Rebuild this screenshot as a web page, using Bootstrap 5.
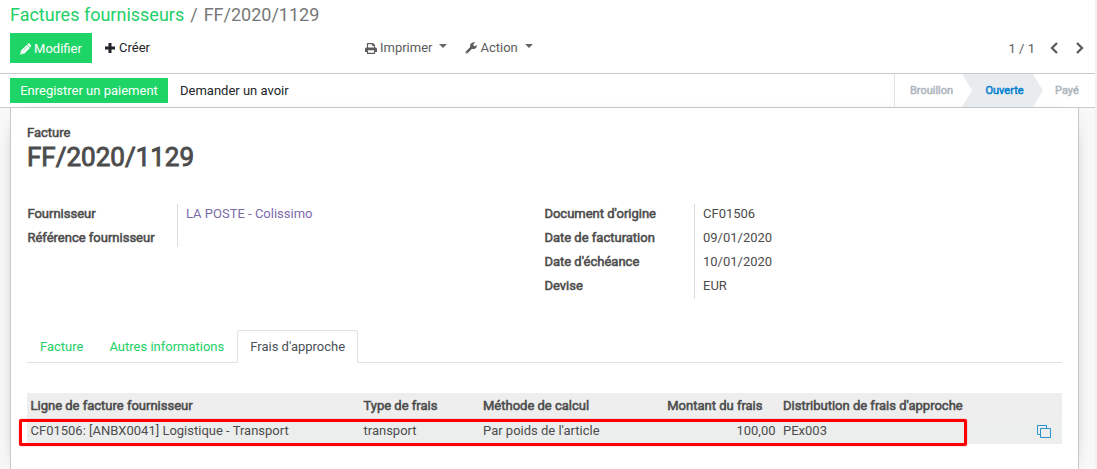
<!DOCTYPE html>
<html lang="fr">
<head>
<meta charset="utf-8">
<meta name="viewport" content="width=device-width, initial-scale=1">
<title>FF/2020/1129</title>
<link href="https://cdn.jsdelivr.net/npm/bootstrap@5.3.0/dist/css/bootstrap.min.css" rel="stylesheet">
<style>
body{font-family:Roboto,"Liberation Sans",sans-serif;font-size:13px;line-height:19.5px;color:#4c4c4c;height:469px;overflow:hidden;background:#f1f1f1}
a{text-decoration:none}
.page-area{width:1095px;height:469px;background:#f8f8f8;overflow:hidden}
.control-panel{height:74px;border-bottom:1px solid #cacaca;padding:0 10px}
.trail{height:33px;padding-top:1px;font-size:18px;line-height:27px;color:#777}
.trail .breadcrumb-item+.breadcrumb-item::before{color:#777;padding-right:6px}
.trail .breadcrumb-item+.breadcrumb-item{padding-left:6px}
.trail a,.nav-tabs .nav-link{color:#21d067}
.btn{--bs-btn-font-size:13px;--bs-btn-line-height:19.5px;--bs-btn-border-radius:0;--bs-btn-border-width:0}
.btn-main{--bs-btn-color:#fff;--bs-btn-bg:#1dd467;--bs-btn-hover-bg:#19b658;--bs-btn-hover-color:#fff}
.edit-btn{width:82px;height:30px;padding:1px 0 0}
.tool{color:#5c5c5c}
.caret{width:0;border:4px solid transparent;border-top-color:#666;border-bottom:0;margin-left:7px;margin-bottom:4px}
.status-line{height:34px;border-bottom:1px solid #cacaca;padding-left:10px}
.pay-btn{width:158px;height:25px;padding:0}
.stages{font-size:11px;-webkit-text-stroke:.5px #adb5bd;color:#adb5bd;border-left:1px solid #dee2e6;height:33px;width:201px}
.stage-now{width:81px;height:33px;background:#e9ecef;color:#0180cf;-webkit-text-stroke-color:#0180cf;clip-path:polygon(0 0,71px 0,81px 50%,71px 100%,0 100%,10px 50%)}
.sheet{width:1069px;height:361px;margin-left:10px;padding:15px 16px 0;border:1px solid #c8c8d3;border-width:0 1px;box-shadow:0 5px 20px -15px #000}
.heavy,.heavy th{font-weight:400;-webkit-text-stroke:.55px #4c4c4c}
h1.doc-name{font-size:26px;line-height:31px;margin:-1px 0 0;-webkit-text-stroke:.9px #4c4c4c}
.fields{display:grid;grid-template-columns:150px 1fr;grid-auto-rows:24px;align-content:start}
.fields dt,.fields dd{margin:0;height:24px;line-height:19px}
.fields dt{padding-left:.4px}
.fields dd{border-left:1px solid #ddd;padding-left:8px}
.fields .last-row{height:23px}
.fields .short{height:19px}
.nav-tabs{--bs-nav-tabs-border-radius:3px;margin-top:30px;height:33px}
.nav-tabs .nav-link{padding:6px 12px;line-height:19.5px;height:33px}
.nav-tabs .nav-link.active{color:#495057}
.cost-table{table-layout:fixed;width:1035px;color:#4c4c4c;border-collapse:separate;border-spacing:0}
.cost-table th,.cost-table td{padding:0 4px 0 3.500px;line-height:19px;white-space:nowrap;vertical-align:top}
.cost-table th{height:26px;padding-top:3px;background:#eee}
.cost-table td{height:25px;padding-top:2px;background:#eceeee}
.mark-box{left:-8px;top:26px;width:948px;height:27px;border:3px solid #ff0004;border-radius:2px;box-shadow:0 0 1px #f00}
</style>
</head>
<body>
<div class="page-area">
  <header class="control-panel bg-white">
    <ol class="breadcrumb trail mb-0">
      <li class="breadcrumb-item"><a href="#">Factures fournisseurs</a></li>
      <li class="breadcrumb-item">FF/2020/1129</li>
    </ol>
    <div class="d-flex align-items-center" style="height:30px">
      <button class="btn btn-main edit-btn d-flex align-items-center justify-content-center"><svg width="11" height="12" viewBox="0 0 11 12" fill="#fff" style="margin-right:3px"><path d="M0 11.500 1 7.600l5.700-5.700 3.200 3.200L4.200 10.800zM7.200 1.400l.8-.8q.7-.5 1.300 0L11 2.300q.5.600 0 1.200l-.7.900z"/><path d="M3.200 7.700 7 3.900" stroke="#1dd467" stroke-width=".5"/><path d="m1.300 9.500 1 1" stroke="#1dd467" stroke-width=".8"/></svg>Modifier</button>
      <button class="btn d-flex align-items-center p-0 text-dark" style="margin-left:13px"><svg width="10" height="10" viewBox="0 0 10 10" style="margin-right:4px"><path d="M5 0v10M0 5h10" stroke="#212529" stroke-width="3"/></svg>Créer</button>
      <div class="d-flex align-items-center tool" style="margin-left:215px">
        <svg width="12" height="11" viewBox="0 0 12 11" style="margin-right:3px"><path d="M2.500 5V.6h5.300l1.700 1.700V5M2.500 7.500v2.900h7V7.500" fill="none" stroke="#5c5c5c" stroke-width="1.100"/><path d="M0 9V6q0-1.500 1.400-1.500h9.200Q12 4.500 12 6v3H9.500V7.300h-7V9z" fill="#5c5c5c"/><path d="M7.500.5v2h2" fill="none" stroke="#5c5c5c"/></svg>Imprimer<span class="caret"></span>
        <svg width="12" height="12" viewBox="0 0 12 12" style="margin:0 3px 0 18px" fill="#5c5c5c"><path fill-rule="evenodd" d="M5.200 5Q4.600 2.700 6.300 1.200 8-.3 10.400.5L8.400 1.900v1.600l1.400.8 2.100-1.300Q12 5.400 10.300 6.400 8.800 7.400 7 6.800l-4.400 4.500q-.8.800-1.700 0t0-1.800zM1.400 10.200v.9h.9v-.9z"/></svg>Action<span class="caret"></span>
      </div>
      <div class="d-flex align-items-center tool ms-auto" style="margin-right:1px;padding-top:1px">1 / 1
        <svg width="8" height="12" viewBox="0 0 8 12" style="margin:-2px 18px 0 15px"><path d="M7 1 2 6l5 5" fill="none" stroke="#5c5c5c" stroke-width="2.300"/></svg>
        <svg width="8" height="12" viewBox="0 0 8 12" style="margin-top:-2px"><path d="m1 1 5 5-5 5" fill="none" stroke="#5c5c5c" stroke-width="2.300"/></svg>
      </div>
    </div>
  </header>
  <div class="status-line bg-white d-flex">
    <button class="btn btn-main pay-btn" style="margin-top:4px">Enregistrer un paiement</button>
    <button class="btn p-0 text-dark" style="margin-left:12px">Demander un avoir</button>
    <div class="stages d-flex align-items-center ms-auto">
      <span class="text-center" style="width:67px;padding-left:6px">Brouillon</span>
      <span class="stage-now d-flex align-items-center justify-content-center" style="padding-left:4px">Ouverte</span>
      <span style="margin-left:12px">Payé</span>
    </div>
  </div>
  <main class="sheet bg-white">
    <div class="heavy">Facture</div>
    <h1 class="doc-name heavy">FF/2020/1129</h1>
    <div class="d-flex" style="margin-top:31px;height:96px">
      <dl class="fields mb-0" style="width:517px">
        <dt class="heavy">Fournisseur</dt><dd><a href="#" style="color:#7c6bab">LA POSTE - Colissimo</a></dd>
        <dt class="heavy">Référence fournisseur</dt><dd class="short"></dd>
      </dl>
      <dl class="fields mb-0 flex-fill">
        <dt class="heavy">Document d'origine</dt><dd>CF01506</dd>
        <dt class="heavy">Date de facturation</dt><dd>09/01/2020</dd>
        <dt class="heavy">Date d'échéance</dt><dd>10/01/2020</dd>
        <dt class="heavy">Devise</dt><dd class="last-row">EUR</dd>
      </dl>
    </div>
    <ul class="nav nav-tabs">
      <li class="nav-item"><a class="nav-link" href="#">Facture</a></li>
      <li class="nav-item"><a class="nav-link" href="#">Autres informations</a></li>
      <li class="nav-item"><a class="nav-link active" href="#">Frais d'approche</a></li>
    </ul>
    <div class="position-relative" style="margin-top:30px">
      <table class="cost-table">
        <colgroup><col style="width:333px"><col style="width:119.500px"><col style="width:180px"><col style="width:120px"><col style="width:240px"><col></colgroup>
        <thead class="heavy"><tr><th>Ligne de facture fournisseur</th><th>Type de frais</th><th>Méthode de calcul</th><th class="text-end" style="padding-right:17px">Montant du frais</th><th>Distribution de frais d'approche</th><th></th></tr></thead>
        <tbody><tr><td>CF01506: [ANBX0041] Logistique - Transport</td><td>transport</td><td>Par poids de l'article</td><td class="text-end">100,00</td><td>PEx003</td>
        <td><svg width="14" height="14" viewBox="0 0 14 14" fill="none" stroke="#2a93d0" style="margin:4px 0 0 13.500px;display:block"><path d="M3.500 9.500h-3V.5h9v3M3.500 3.500h10v9h-10z"/></svg></td></tr></tbody>
      </table>
      <div class="mark-box position-absolute"></div>
    </div>
  </main>
</div>
<script src="https://cdn.jsdelivr.net/npm/bootstrap@5.3.0/dist/js/bootstrap.bundle.min.js"></script>
</body>
</html>
